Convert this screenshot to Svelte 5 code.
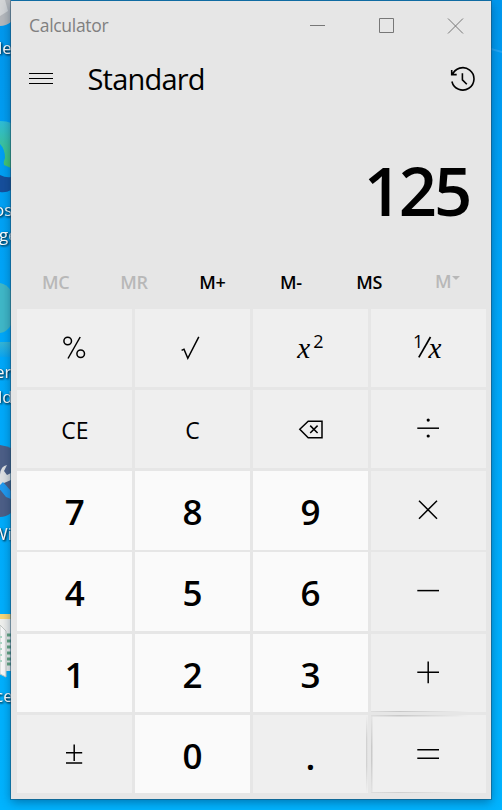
<script>
  const memory = [
    { label: 'MC', enabled: false },
    { label: 'MR', enabled: false },
    { label: 'M+', enabled: true },
    { label: 'M-', enabled: true },
    { label: 'MS', enabled: true },
    { label: 'M', enabled: false, menu: true }
  ];
  const keys = [
    'percent', 'root', 'square', 'reciprocal',
    'CE', 'C', 'back', 'divide',
    '7', '8', '9', 'times',
    '4', '5', '6', 'minus',
    '1', '2', '3', 'plus',
    'sign', '0', '.', 'equals'
  ];
  const icons = {
    percent: 'M63.2 28 51 49.5',
    root: 'M46.6 41.4 49 40.2 52.8 49.3 63.8 27.8',
    back: 'M46.8 39.2 55.2 31.2H69V47.7H55.2ZM57.2 35.6 64.6 43M64.6 35.6 57.2 43',
    divide: 'M46.3 38.2H68',
    times: 'M48 29.7 66 47.7M66 29.7 48 47.7',
    minus: 'M46.3 38.6H68',
    plus: 'M46.3 38.3H68M57.2 27.5V49.2',
    sign: 'M49 37.7H65.2M57.2 29.5V46M49 47.9H65.2',
    equals: 'M46.3 34.7H68M46.3 43.2H68'
  };
  const isDigit = (key) => /^[0-9]$/.test(key);
</script>

<main class="desktop">
  <svg class="wallpaper" width="502" height="810" viewBox="0 0 502 810" aria-hidden="true">
    <defs>
      <linearGradient id="sky" x1="0" y1="0" x2="0" y2="1">
        <stop offset="0" stop-color="#0098ee" />
        <stop offset=".4" stop-color="#00a8fa" />
        <stop offset="1" stop-color="#00b4ff" />
      </linearGradient>
      <linearGradient id="edge" x1="0" y1="0" x2="0" y2="1">
        <stop offset="0" stop-color="#2fbdd8" />
        <stop offset="1" stop-color="#45c76b" />
      </linearGradient>
      <linearGradient id="base" x1="0" y1="0" x2="0" y2="1">
        <stop offset="0" stop-color="#36b5d5" />
        <stop offset="1" stop-color="#0ba6f1" />
      </linearGradient>
    </defs>
    <rect width="502" height="810" fill="url(#sky)" />
    <path d="M491 48 502 51V53L491 50Z" fill="#23a6f5" />
    <path d="M0 0H11V22Q6 26 0 26Z" fill="#b5b8bc" />
    <path d="M0 0H5L8 11 0 16Z" fill="#d3d5d7" />
    <path d="M0 121Q7 121 11 123V168L4 165Q3 162 5 158 5 149 0 144Z" fill="url(#edge)" />
    <path d="M0 175Q6 178 11 177V190Q6 193 0 192Z" fill="#164f9c" />
    <path d="M0 283Q7 284 11 291V325Q7 332 0 333Z" fill="#40b8c8" />
    <rect y="342" width="11" height="15" fill="url(#base)" />
    <path d="M0 445Q6 446 11 448V513Q6 517 0 517Z" fill="#4d5f87" />
    <path d="M0 480Q-1 466 7 465L4 471 7 475 11 473V480L4 483 0 490Z" fill="#dfe1e3" />
    <path d="M-2 487 3 482 11 491V499L6 497Z" fill="#219af0" />
    <rect y="614" width="11" height="57" fill="#f0f1ee" />
    <rect y="614" width="11" height="5" fill="#f8d777" />
    <path d="M7 635H11M7 641H11M7 647H11M7 653H11M7 659H11M7 664H11" stroke="#67a783" stroke-width="3" />
    <path d="M0 625 6 631V677L0 674Z" fill="#fafafa" stroke="#c3c9c6" />
    <path d="M0 637H2M0 643H2M0 649H2M0 655H2M0 661H2" stroke="#aed7c6" stroke-width="2" />
    <g class="labels">
      <text x="-2" y="54">le</text>
      <text x="-6" y="216">os</text>
      <text x="-1" y="241">ge</text>
      <text x="-5" y="378">er</text>
      <text x="-2" y="403">ld</text>
      <text x="-8" y="540">Wi</text>
      <text x="-5" y="702">ce</text>
    </g>
  </svg>

  <section class="window">
    <header class="titlebar">
      <span class="title">Calculator</span>
      <svg width="160" height="48" viewBox="0 0 160 48" fill="none" stroke="#777" aria-hidden="true">
        <path d="M0 24.5H15M69.5 17.5H83.5V31.5H69.5ZM138 17.5 153 32.5M153 17.5 138 32.5" />
      </svg>
    </header>

    <nav class="modebar">
      <svg width="24" height="12" viewBox="0 0 24 12" stroke="#000" aria-hidden="true">
        <path d="M0 .5H24M0 5.5H24M0 10.5H24" />
      </svg>
      <h1>Standard</h1>
      <svg width="26" height="26" viewBox="0 0 26 26" fill="none" stroke="#000" stroke-width="1.6" aria-hidden="true">
        <path d="M2.2 9.2A11.2 11.2 0 1 1 1.9 15.5M1.7 4V8.6H6.7M12.4 7.2V13.8L16.8 18.3" />
      </svg>
    </nav>

    <output class="result">125</output>

    <div class="memory">
      {#each memory as item}
        <button class:disabled={!item.enabled} class:menu={item.menu}>
          {item.label}{#if item.menu}<i></i>{/if}
        </button>
      {/each}
    </div>

    <div class="keypad">
      {#each keys as key}
        <button
          class="key {key === '.' ? 'point' : isDigit(key) ? 'digit' : key}"
          aria-label={key}
        >
          {#if icons[key]}
            <svg width="115" height="79" viewBox="0 0 115 79" fill="none" stroke="#000" stroke-width="1.5">
              {#if key === 'percent'}
                <circle cx="50.7" cy="32" r="3.8" />
                <circle cx="63.7" cy="44.8" r="3.8" />
              {/if}
              <path d={icons[key]} />
              {#if key === 'divide'}
                <g fill="#000" stroke="none">
                  <circle cx="57.2" cy="30.1" r="1.6" />
                  <circle cx="57.2" cy="46" r="1.6" />
                </g>
              {/if}
            </svg>
          {:else if key === 'square'}
            <span class="formula"><em>x</em><sup>2</sup></span>
          {:else if key === 'reciprocal'}
            <span class="formula">
              <sup>1</sup>
              <svg width="10" height="79" viewBox="0 0 10 79" overflow="visible" stroke="#000" stroke-width="1.7">
                <path d="M-4.2 48.3 7.5 28" />
              </svg>
              <em>x</em>
            </span>
          {:else}
            <span>{key}</span>
          {/if}
        </button>
      {/each}
    </div>
  </section>
</main>

<style>
  :global(body) {
    margin: 0;
  }
  .desktop {
    position: relative;
    box-sizing: border-box;
    width: 502px;
    height: 810px;
    padding: 1px 11px 11px;
    overflow: hidden;
    font-family: "Open Sans", "Noto Sans", sans-serif;
  }
  .wallpaper {
    position: absolute;
    inset: 0;
  }
  .labels {
    fill: #fff;
    font-size: 17px;
    filter: drop-shadow(1px 1px 1px #000);
  }
  .window {
    position: relative;
    display: flex;
    flex-direction: column;
    width: 480px;
    height: 798px;
    background: #e6e6e6;
    box-shadow: 0 0 0 1px rgb(30 75 105 / 50%), 0 3px 10px rgb(0 35 70 / 45%);
  }
  button {
    padding: 0;
    border: 0;
    background: none;
    color: #000;
    font: inherit;
  }
  .titlebar {
    display: flex;
    justify-content: space-between;
    height: 48px;
    padding: 0 21px 0 18px;
    color: #808080;
  }
  .title {
    font-size: 17.5px;
    line-height: 49px;
    letter-spacing: -0.3px;
  }
  .modebar {
    display: flex;
    align-items: center;
    height: 60px;
    padding: 0 15px 0 18px;
  }
  h1 {
    flex: 1;
    margin: 0 0 0 34.5px;
    font-size: 29px;
    font-weight: 400;
    line-height: 60px;
    letter-spacing: -0.8px;
  }
  .result {
    display: block;
    height: 150px;
    padding-right: 22px;
    text-align: right;
    font-size: 67px;
    font-weight: 600;
    line-height: 163px;
    letter-spacing: -3.2px;
  }
  .memory {
    display: grid;
    grid-template-columns: repeat(6, 78.4px);
    padding-left: 5.5px;
    height: 49.5px;
  }
  .memory button {
    font-size: 18px;
    font-weight: 600;
    line-height: 45px;
    padding-bottom: 2px;
    letter-spacing: -0.2px;
  }
  .memory .disabled {
    color: #b8b8b8;
  }
  .memory .menu {
    padding-bottom: 4px;
  }
  .menu i {
    display: inline-block;
    margin-left: 1px;
    border: 4px solid transparent;
    border-top-color: #b8b8b8;
    vertical-align: 4px;
  }
  .keypad {
    display: grid;
    grid-template-columns: repeat(4, 115px);
    grid-auto-rows: 78.5px;
    gap: 2.8px;
    padding-left: 6.3px;
  }
  .key {
    display: flex;
    justify-content: center;
    background: #efefef;
    font-size: 23px;
    line-height: 81px;
  }
  .digit {
    background: #fafafa;
    font-size: 35px;
    font-weight: 600;
    line-height: 82px;
  }
  .point {
    font-size: 36px;
    font-weight: 600;
    line-height: 83px;
    background: linear-gradient(#0000, #d2d2d2 30% 65%, #0000) right / 1.5px 100% no-repeat, #efefef;
  }
  .plus {
    background: linear-gradient(90deg, #ddd, #c8c8c8 25%, #efefef 85%) bottom / 100% 1.5px no-repeat, #efefef;
  }
  .equals {
    background:
      linear-gradient(90deg, #ddd, #c8c8c8 25%, #efefef 85%) top / 100% 1.5px no-repeat,
      linear-gradient(90deg, #ddd, #d0d0d0 25%, #efefef 85%) bottom / 100% 1.5px no-repeat,
      linear-gradient(#e4e4e4, #cacaca 40% 60%, #e4e4e4) left / 1.5px 100% no-repeat,
      #efefef;
  }
  .formula {
    display: flex;
  }
  .formula em {
    font: italic 29px/78px "Liberation Serif", serif;
  }
  .formula sup {
    font-size: 18px;
    line-height: 65px;
    vertical-align: baseline;
  }
  .square sup {
    margin-left: 3px;
  }
  .reciprocal sup {
    margin-left: -2px;
  }
  .reciprocal em {
    margin-left: -5px;
  }
</style>
